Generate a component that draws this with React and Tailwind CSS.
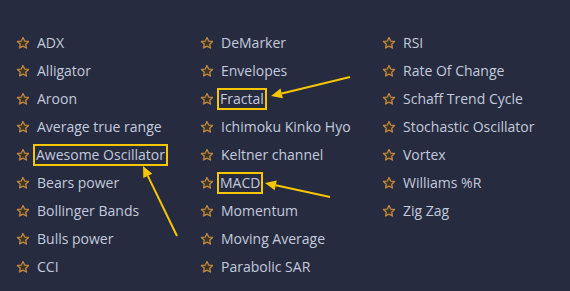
import React from "react";

const cols = [
  ["ADX", "Alligator", "Aroon", "Average true range", "Awesome Oscillator", "Bears power", "Bollinger Bands", "Bulls power", "CCI"],
  ["DeMarker", "Envelopes", "Fractal", "Ichimoku Kinko Hyo", "Keltner channel", "MACD", "Momentum", "Moving Average", "Parabolic SAR"],
  ["RSI", "Rate Of Change", "Schaff Trend Cycle", "Stochastic Oscillator", "Vortex", "Williams %R", "Zig Zag"],
];
const boxed = new Set(["Awesome Oscillator", "Fractal", "MACD"]);

function Star() {
  return (
    <svg width="14" height="14" viewBox="0 0 24 24" className="shrink-0">
      <path
        d="M12 2.5l2.9 6.1 6.6.8-4.9 4.6 1.3 6.6L12 17.3l-5.9 3.3 1.3-6.6-4.9-4.6 6.6-.8z"
        fill="#3a3326"
        stroke="#c48a3e"
        strokeWidth="2.2"
        strokeLinejoin="round"
      />
    </svg>
  );
}

function Arrow({ x1, y1, x2, y2 }) {
  const ang = Math.atan2(y2 - y1, x2 - x1);
  const L = 11, W = 5;
  const bx = x2 - L * Math.cos(ang), by = y2 - L * Math.sin(ang);
  const px = -Math.sin(ang) * W, py = Math.cos(ang) * W;
  return (
    <g>
      <line x1={x1} y1={y1} x2={bx} y2={by} stroke="#f7c600" strokeWidth="2" />
      <polygon points={`${x2},${y2} ${bx + px},${by + py} ${bx - px},${by - py}`} fill="#f7c600" />
    </g>
  );
}

export default function App() {
  return (
    <div className="relative w-[570px] h-[291px] bg-[#262b3f] overflow-hidden" style={{ fontFamily: '"Open Sans", sans-serif' }}>
      <div className="grid grid-cols-[184px_182px_182px] pl-[16px] pt-[29px]">
        {cols.map((c, i) => (
          <div key={i} className="flex flex-col">
            {c.map((t) => (
              <div key={t} className="h-[28px] flex items-center gap-[7px]">
                <Star />
                <span
                  className={
                    "text-[14px] text-[#c3cadd] leading-none whitespace-nowrap " +
                    (boxed.has(t) ? "outline outline-2 outline-[#f7c600] px-[1px] py-[2px] -ml-[2px]" : "")
                  }
                >
                  {t}
                </span>
              </div>
            ))}
          </div>
        ))}
      </div>
      <svg className="absolute inset-0 pointer-events-none" width="570" height="291">
        <Arrow x1={350} y1={77} x2={271} y2={96} />
        <Arrow x1={330} y1={197} x2={265} y2={183} />
        <Arrow x1={177} y1={236} x2={143} y2={166} />
      </svg>
    </div>
  );
}
